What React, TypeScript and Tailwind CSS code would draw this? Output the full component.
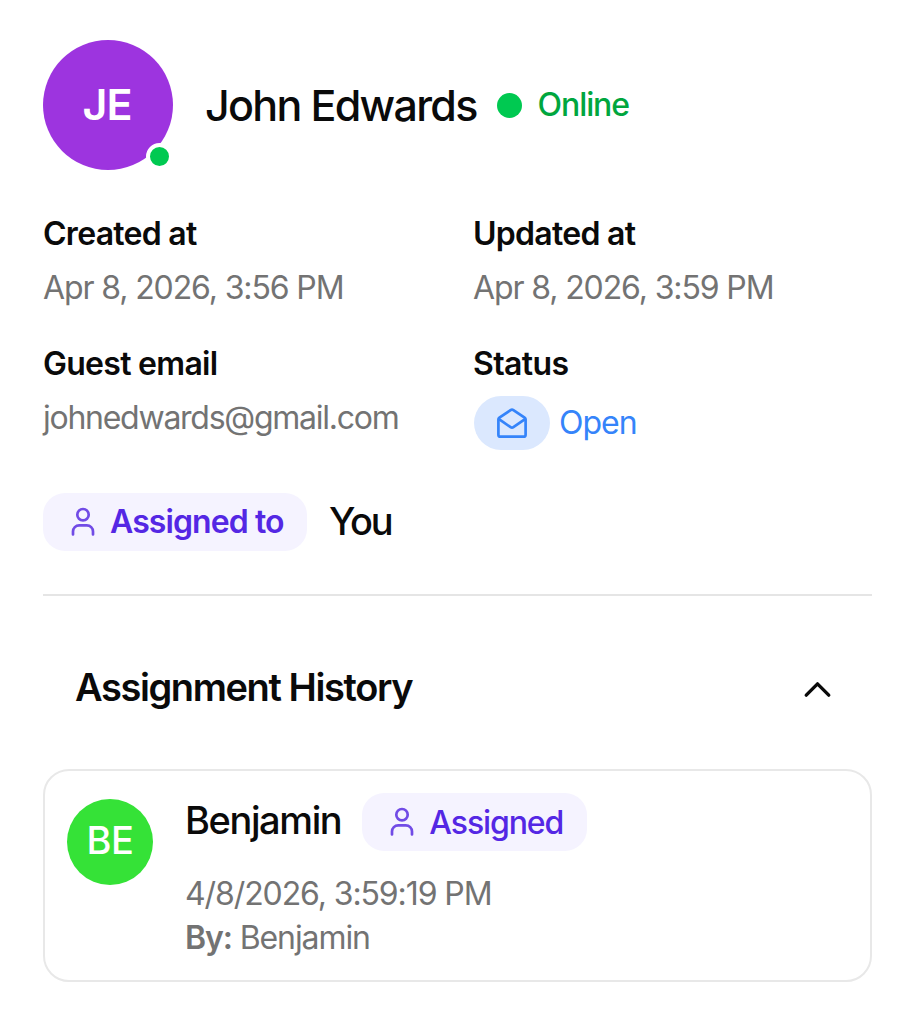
import { ChevronUp } from "lucide-react";

function Detail({ label, value, valueClass }: { label: string; value: string; valueClass: string }) {
  return (
    <div>
      <div className="text-[32px] leading-[54px] font-semibold tracking-[-0.72px] text-[#0a0a0a]">{label}</div>
      <div className={`text-[32px] leading-[54px] text-[#737373] ${valueClass}`}>{value}</div>
    </div>
  );
}

function OpenEnvelope() {
  return (
    <svg viewBox="0 0 32 32" className="size-8" fill="none" stroke="currentColor" strokeWidth="2.7" strokeLinecap="round" strokeLinejoin="round">
      <path d="M2.4 12.6Q2.4 11.4 3.4 10.7L14.6 3.1a2.5 2.5 0 0 1 2.8 0L28.6 10.7Q29.6 11.4 29.6 12.6V27.7a2 2 0 0 1-2 2H4.4a2 2 0 0 1-2-2Z" />
      <path d="m3 12.2 11.6 8a2.5 2.5 0 0 0 2.8 0L29 12.2" />
    </svg>
  );
}

function Person() {
  return (
    <svg viewBox="0 0 32 32" className="size-8 shrink-0" fill="none" stroke="#714be6" strokeWidth="2.7" strokeLinecap="round" strokeLinejoin="round">
      <circle cx="16" cy="8.7" r="5.7" />
      <path d="M6 28.5V25.5a6.2 6.2 0 0 1 6.2-6.2h7.6a6.2 6.2 0 0 1 6.2 6.2V28.5" />
    </svg>
  );
}

export default function App() {
  return (
    <main className="h-[1024px] w-[915px] overflow-hidden bg-white px-[43px] pt-10 font-['Inter',sans-serif] whitespace-nowrap text-[#0a0a0a]">
      <header className="flex h-[130px] items-center">
        <div className="relative flex size-[130px] items-center justify-center rounded-full bg-[#9d34df] pr-0.5 pb-0.5 text-[43px] font-semibold tracking-[-1px] text-white">
          JE
          <span className="absolute right-0 bottom-0 size-[27px] rounded-full border-[4.5px] border-white bg-[#00c951]" />
        </div>
        <h1 className="ml-8 text-[43px] font-medium tracking-[-1.7px]">John Edwards</h1>
        <span className="ml-5 size-[25px] rounded-full bg-[#00c951]" />
        <span className="ml-4 text-[32px] font-medium tracking-[-1.1px] text-[#00a63e]">Online</span>
      </header>
      <section className="mt-[37px] grid grid-cols-[430px_1fr] gap-y-[22px]">
        <Detail label="Created at" value="Apr 8, 2026, 3:56 PM" valueClass="tracking-[-1.12px]" />
        <Detail label="Updated at" value="Apr 8, 2026, 3:59 PM" valueClass="tracking-[-1.12px]" />
        <Detail label="Guest email" value="johnedwards@gmail.com" valueClass="tracking-[-1.26px]" />
        <div>
          <div className="text-[32px] leading-[54px] font-semibold tracking-[-0.6px]">Status</div>
          <div className="mt-[5px] flex h-[54px] items-center text-[#3584fa]">
            <span className="ml-px flex h-[54px] w-[76px] items-center justify-center rounded-full bg-[#dbe8fe]"><OpenEnvelope /></span>
            <span className="ml-[9px] text-[32px] tracking-[-1px]">Open</span>
          </div>
        </div>
      </section>
      <div className="mt-[43px] flex h-[58px] items-center">
        <span className="flex h-[58px] w-[264px] items-center rounded-[22px] bg-[#f5f3ff] pl-6 text-[32px] font-semibold tracking-[-0.9px] text-[#5427e4]">
          <span className="mr-[11px]"><Person /></span>Assigned to
        </span>
        <span className="-mt-0.5 ml-[22px] text-[38px] font-medium tracking-[-2.2px]">You</span>
      </div>
      <hr className="mt-[43px] border-t-2 border-[#e5e5e5]" />
      <div className="mt-[59px] flex h-16 items-center justify-between pr-[33px] pl-8">
        <h2 className="text-[38px] font-semibold tracking-[-1.4px]">Assignment History</h2>
        <ChevronUp size={45} strokeWidth={1.8} className="-mr-px mt-[5px]" />
      </div>
      <article className="mt-[50px] flex h-[213px] rounded-[26px] border-2 border-[#e8e8e8] pt-[22px] pl-[22px]">
        <div className="mt-[6px] flex size-[86px] items-center justify-center rounded-full bg-[#35e237] pb-1 text-[38px] font-medium tracking-[-0.5px] text-white">BE</div>
        <div className="ml-8">
          <div className="flex h-[58px] items-center">
            <h3 className="-mt-[3px] text-[38px] font-medium tracking-[-1.4px]">Benjamin</h3>
            <span className="ml-[21px] flex h-[58px] w-[225px] items-center rounded-[22px] bg-[#f5f3ff] pl-6 text-[32px] font-medium tracking-[-1.1px] text-[#5427e4]">
              <span className="mr-[11px]"><Person /></span><span className="mt-px">Assigned</span>
            </span>
          </div>
          <div className="mt-[21px] text-[32px] leading-[44px] tracking-[-1.1px] text-[#737373]">4/8/2026, 3:59:19 PM</div>
          <div className="text-[32px] leading-[44px] tracking-[-1.1px] text-[#737373]"><b className="font-semibold">By:</b> Benjamin</div>
        </div>
      </article>
    </main>
  );
}
